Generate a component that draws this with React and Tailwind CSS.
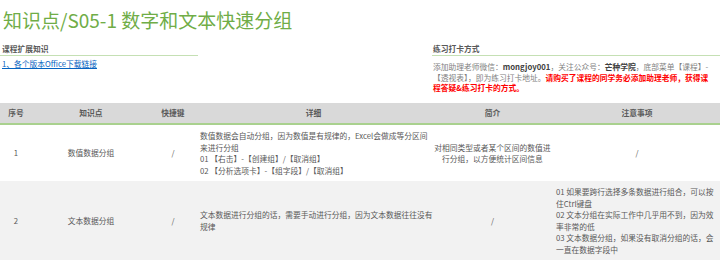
import React from 'react';

const rows = [
  {
    no: '1',
    point: '数值数据分组',
    key: '/',
    detail: ['数值数据会自动分组，因为数值是有规律的，Excel会做成等分区间', '来进行分组', '01 【右击】-【创建组】/【取消组】', '02 【分析选项卡】-【组字段】/【取消组】'],
    intro: ['对相同类型或者某个区间的数值进', '行分组，以方便统计区间信息'],
    notes: ['/'],
    notesCenter: true,
  },
  {
    no: '2',
    point: '文本数据分组',
    key: '/',
    detail: ['文本数据进行分组的话，需要手动进行分组，因为文本数据往往没有', '规律'],
    intro: ['/'],
    notes: ['01 如果要跨行选择多条数据进行组合，可以按', '住Ctrl键盘', '02 文本分组在实际工作中几乎用不到，因为效', '率非常的低', '03 文本数据分组，如果没有取消分组的话，会', '一直在数据字段中'],
  },
];

export default function App() {
  return (
    <div className="w-[720px] h-[261px] overflow-hidden bg-white text-[#595959]" style={{ fontFamily: '"Noto Sans CJK SC", "Noto Sans", sans-serif' }}>
      {/* Title */}
      <h1 className="pl-[3px] pt-[6px] text-[19px] leading-[28px] text-[#70ad47]">知识点/S05-1 数字和文本快速分组</h1>

      {/* Info blocks */}
      <div className="flex justify-between mt-[9px] h-[60px]">
        <div className="w-[198px]">
          <div className="pl-[2px] text-[7.75px] leading-[11px] font-bold text-[#595959] border-b border-[#c5e0b4] pb-[1px]">课程扩展知识</div>
          <a className="block pl-[2px] mt-[2px] text-[7.75px] leading-[11px] text-[#0563c1] underline">1、各个版本Office下载链接</a>
        </div>
        <div className="w-[288px]">
          <div className="pl-[1px] text-[7.75px] leading-[11px] font-bold text-[#595959] border-b border-[#c5e0b4] pb-[1px]">练习打卡方式</div>
          <div className="pl-[1px] mt-[6px] text-[7.75px] leading-[10.5px] text-[#7f7f7f] whitespace-nowrap">
            <div>添加助理老师微信：<b className="text-[#404040]">mongjoy001</b>，关注公众号：<b className="text-[#404040]">芒种学院</b>，底部菜单【课程】-</div>
            <div>【透视表】，即为练习打卡地址。<b className="text-[#ff0000]">请购买了课程的同学务必添加助理老师，获得课</b></div>
            <div><b className="text-[#ff0000]">程答疑&amp;练习打卡的方式。</b></div>
          </div>
        </div>
      </div>

      {/* Table */}
      <table className="w-[720px] table-fixed border-collapse text-[7.75px] leading-[11.5px]">
        <colgroup>
          <col className="w-[32px]" />
          <col className="w-[118px]" />
          <col className="w-[46px]" />
          <col className="w-[235px]" />
          <col className="w-[123px]" />
          <col className="w-[166px]" />
        </colgroup>
        <thead>
          <tr className="bg-[#d9d9d9] h-[21px] border-b-2 border-[#a9d18e] text-[#595959]">
            <th className="font-bold">序号</th>
            <th className="font-bold">知识点</th>
            <th className="font-bold">快捷键</th>
            <th className="font-bold">详细</th>
            <th className="font-bold">简介</th>
            <th className="font-bold">注意事项</th>
          </tr>
        </thead>
        <tbody>
          {rows.map((r, i) => (
            <tr key={r.no} className={i % 2 === 1 ? 'bg-[#f2f2f2]' : 'bg-white'}>
              <td className="text-center align-middle py-[5px]">{r.no}</td>
              <td className="text-center align-middle">{r.point}</td>
              <td className="text-center align-middle">{r.key}</td>
              <td className="align-middle pl-[4px] py-[5px] whitespace-nowrap">
                {r.detail.map((d) => <div key={d}>{d}</div>)}
              </td>
              <td className="text-center align-middle whitespace-nowrap">
                {r.intro.map((d) => <div key={d}>{d}</div>)}
              </td>
              <td className={`align-middle py-[5px] whitespace-nowrap ${r.notesCenter ? 'text-center' : 'pl-[2px]'}`}>
                {r.notes.map((n) => <div key={n}>{n}</div>)}
              </td>
            </tr>
          ))}
        </tbody>
      </table>
    </div>
  );
}
